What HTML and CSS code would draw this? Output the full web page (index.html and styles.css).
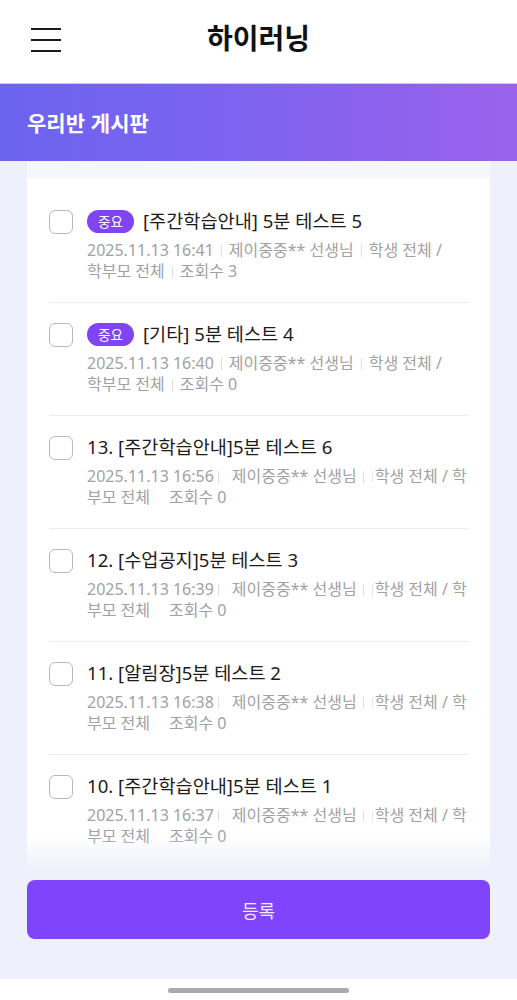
FILE: index.html
```html
<!DOCTYPE html>
<html lang="ko">
<head>
<meta charset="utf-8">
<title>하이러닝</title>
<link rel="stylesheet" href="styles.css">
</head>
<body>
<div class="page">
  <header class="topbar">
    <button class="menu" aria-label="메뉴">
      <span></span><span></span><span></span>
    </button>
    <h1 class="brand">하이러닝</h1>
  </header>
  <div class="banner">우리반 게시판</div>
  <main class="content">
    <section class="card">
      <div class="card-top"></div>
      <ul class="list">
        <li class="item">
          <span class="check"></span>
          <div class="body">
            <div class="title"><span class="badge">중요</span>[주간학습안내] 5분 테스트 5</div>
            <div class="meta">2025.11.13 16:41<i class="sep"></i>제이중중** 선생님<i class="sep"></i>학생 전체 /<br>학부모 전체<i class="sep"></i>조회수 3</div>
          </div>
        </li>
        <li class="item">
          <span class="check"></span>
          <div class="body">
            <div class="title"><span class="badge">중요</span>[기타] 5분 테스트 4</div>
            <div class="meta">2025.11.13 16:40<i class="sep"></i>제이중중** 선생님<i class="sep"></i>학생 전체 /<br>학부모 전체<i class="sep"></i>조회수 0</div>
          </div>
        </li>
        <li class="item">
          <span class="check"></span>
          <div class="body">
            <div class="title">13. [주간학습안내]5분 테스트 6</div>
            <div class="meta">2025.11.13 16:56<i class="sep sep-a"></i>제이중중** 선생님<i class="sep sep-b"></i><i class="sep sep-c"></i>학생 전체 / 학<br>부모 전체<i class="gap"></i>조회수 0</div>
          </div>
        </li>
        <li class="item">
          <span class="check"></span>
          <div class="body">
            <div class="title">12. [수업공지]5분 테스트 3</div>
            <div class="meta">2025.11.13 16:39<i class="sep sep-a"></i>제이중중** 선생님<i class="sep sep-b"></i><i class="sep sep-c"></i>학생 전체 / 학<br>부모 전체<i class="gap"></i>조회수 0</div>
          </div>
        </li>
        <li class="item">
          <span class="check"></span>
          <div class="body">
            <div class="title">11. [알림장]5분 테스트 2</div>
            <div class="meta">2025.11.13 16:38<i class="sep sep-a"></i>제이중중** 선생님<i class="sep sep-b"></i><i class="sep sep-c"></i>학생 전체 / 학<br>부모 전체<i class="gap"></i>조회수 0</div>
          </div>
        </li>
        <li class="item">
          <span class="check"></span>
          <div class="body">
            <div class="title">10. [주간학습안내]5분 테스트 1</div>
            <div class="meta">2025.11.13 16:37<i class="sep sep-a"></i>제이중중** 선생님<i class="sep sep-b"></i><i class="sep sep-c"></i>학생 전체 / 학<br>부모 전체<i class="gap"></i>조회수 0</div>
          </div>
        </li>
      </ul>
    </section>
    <button class="submit">등록</button>
  </main>
  <footer class="homebar"><span></span></footer>
</div>
</body>
</html>
```

FILE: styles.css
```css
* { box-sizing: border-box; }
html, body { margin: 0; padding: 0; }
body {
  font-family: "Noto Sans", "Noto Sans CJK KR", sans-serif;
  background: #ffffff;
  color: #1c1c1c;
}
.page {
  width: 517px;
  height: 1000px;
  display: flex;
  flex-direction: column;
  overflow: hidden;
}
.topbar {
  height: 83px;
  flex: 0 0 83px;
  background: #fff;
  display: flex;
  align-items: center;
  justify-content: center;
  position: relative;
}
.menu {
  position: absolute;
  left: 31px;
  top: 28px;
  width: 30px;
  height: 24px;
  padding: 0;
  border: 0;
  background: transparent;
  display: flex;
  flex-direction: column;
  justify-content: space-between;
}
.menu span {
  display: block;
  width: 30px;
  height: 2px;
  background: #1a1a1a;
}
.brand {
  margin: 0;
  font-family: "Noto Sans CJK KR", sans-serif;
  font-size: 28px;
  font-weight: 700;
  color: #111;
  line-height: 1;
  margin-top: -10px;
}
.banner {
  flex: 0 0 78px;
  height: 78px;
  background: linear-gradient(90deg, #6b64ef 0%, #7f63ef 50%, #9b62ed 100%);
  border-top: 1px solid #cdc6f2;
  color: #fff;
  font-family: "Noto Sans CJK KR", sans-serif;
  font-size: 21px;
  font-weight: 700;
  display: flex;
  align-items: center;
  padding-left: 27px;
  padding-bottom: 2px;
}
.content {
  flex: 1;
  background: #eef1fb;
  padding: 0 27px 40px;
  display: flex;
  flex-direction: column;
}
.card {
  height: 709px;
  flex: 0 0 709px;
  background: #fff;
  overflow: hidden;
  position: relative;
}
.card::after {
  content: "";
  position: absolute;
  left: 0;
  right: 0;
  bottom: 0;
  height: 34px;
  background: linear-gradient(180deg, rgba(238,241,251,0) 0%, #eef1fb 100%);
}
.card-top {
  height: 17px;
  background: #f6f7fd;
}
.list {
  list-style: none;
  margin: 0;
  padding: 12px 21px 0 22px;
}
.item {
  display: flex;
  align-items: flex-start;
  padding: 17px 0 20px;
  border-top: 1px solid #ececef;
}
.item:first-child {
  border-top: 0;
  padding-top: 17px;
}
.check {
  flex: 0 0 24px;
  width: 24px;
  height: 24px;
  margin-top: 3px;
  border: 1.5px solid #b9b9bd;
  border-radius: 6px;
  background: #fff;
}
.body {
  margin-left: 14px;
  flex: 1;
}
.title {
  font-size: 18.6px;
  line-height: 28px;
  color: #1c1c1c;
  display: flex;
  align-items: center;
  white-space: nowrap;
}
.badge {
  display: inline-flex;
  align-items: center;
  justify-content: center;
  width: 47px;
  height: 23px;
  border-radius: 12px;
  background: #7f45f2;
  color: #fff;
  font-family: "Noto Sans CJK KR", sans-serif;
  font-size: 13.5px;
  margin-right: 9px;
}
.meta {
  margin-top: 5px;
  font-size: 16px;
  line-height: 21px;
  color: #a1a1a4;
  white-space: nowrap;
}
.sep {
  display: inline-block;
  width: 1px;
  height: 12px;
  background: #dedee2;
  margin: 0 7px;
  vertical-align: -1px;
}
.sep-a { margin: 0 13px 0 4px; }
.sep-b { margin: 0 8px 0 6px; }
.sep-c { margin: 0 2px 0 0; background: #e8e8ec; }
.gap {
  display: inline-block;
  width: 19px;
}
.submit {
  margin-top: 10px;
  height: 59px;
  flex: 0 0 59px;
  border: 0;
  border-radius: 8px;
  background: #7f44fc;
  color: #f3ecff;
  font-family: "Noto Sans CJK KR", sans-serif;
  font-size: 18px;
}
.homebar {
  flex: 0 0 21px;
  height: 21px;
  background: #fff;
  display: flex;
  justify-content: center;
  padding-top: 9px;
}
.homebar span {
  width: 181px;
  height: 5px;
  border-radius: 3px;
  background: #ababab;
}
```
